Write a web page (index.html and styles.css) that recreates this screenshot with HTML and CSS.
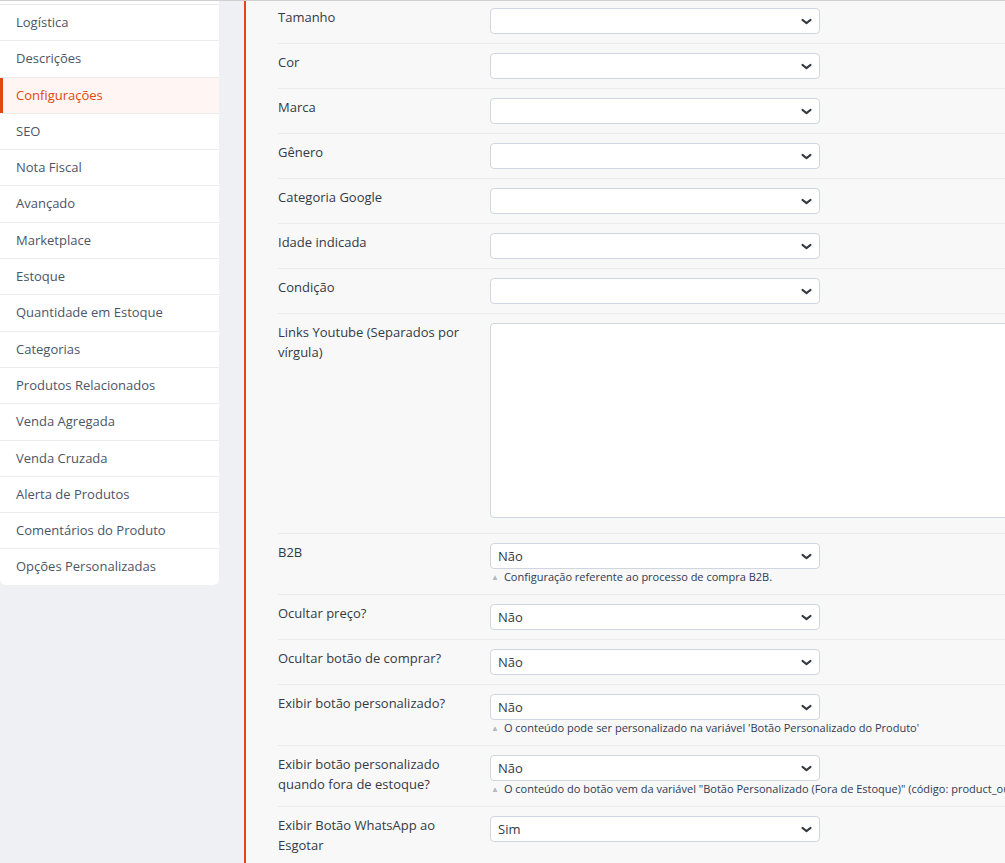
FILE: index.html
```html
<!DOCTYPE html>
<html lang="pt-BR">
  <head>
    <meta charset="UTF-8" />
    <meta name="viewport" content="width=device-width, initial-scale=1.0" />
    <title>Produto - Configurações</title>
    <link rel="stylesheet" href="styles.css">
  </head>
  <body>
    <div class="page">
      <ul class="tabs">
        <li>Logística</li>
        <li>Descrições</li>
        <li class="active">Configurações</li>
        <li>SEO</li>
        <li>Nota Fiscal</li>
        <li>Avançado</li>
        <li>Marketplace</li>
        <li>Estoque</li>
        <li>Quantidade em Estoque</li>
        <li>Categorias</li>
        <li>Produtos Relacionados</li>
        <li>Venda Agregada</li>
        <li>Venda Cruzada</li>
        <li>Alerta de Produtos</li>
        <li>Comentários do Produto</li>
        <li>Opções Personalizadas</li>
      </ul>

      <form class="panel">
        <div class="field">
          <label>Tamanho</label>
          <div class="control"><select><option></option></select></div>
        </div>
        <div class="field">
          <label>Cor</label>
          <div class="control"><select><option></option></select></div>
        </div>
        <div class="field">
          <label>Marca</label>
          <div class="control"><select><option></option></select></div>
        </div>
        <div class="field">
          <label>Gênero</label>
          <div class="control"><select><option></option></select></div>
        </div>
        <div class="field">
          <label>Categoria Google</label>
          <div class="control"><select><option></option></select></div>
        </div>
        <div class="field">
          <label>Idade indicada</label>
          <div class="control"><select><option></option></select></div>
        </div>
        <div class="field">
          <label>Condição</label>
          <div class="control"><select><option></option></select></div>
        </div>
        <div class="field field-text">
          <label>Links Youtube (Separados por vírgula)</label>
          <div class="control"><textarea></textarea></div>
        </div>
        <div class="field">
          <label>B2B</label>
          <div class="control">
            <select><option>Não</option><option>Sim</option></select>
            <p class="hint">Configuração referente ao processo de compra B2B.</p>
          </div>
        </div>
        <div class="field">
          <label>Ocultar preço?</label>
          <div class="control"><select><option>Não</option><option>Sim</option></select></div>
        </div>
        <div class="field">
          <label>Ocultar botão de comprar?</label>
          <div class="control"><select><option>Não</option><option>Sim</option></select></div>
        </div>
        <div class="field">
          <label>Exibir botão personalizado?</label>
          <div class="control">
            <select><option>Não</option><option>Sim</option></select>
            <p class="hint">O conteúdo pode ser personalizado na variável 'Botão Personalizado do Produto'</p>
          </div>
        </div>
        <div class="field">
          <label>Exibir botão personalizado quando fora de estoque?</label>
          <div class="control">
            <select><option>Não</option><option>Sim</option></select>
            <p class="hint">O conteúdo do botão vem da variável "Botão Personalizado (Fora de Estoque)" (código: product_out_of_stock_button)</p>
          </div>
        </div>
        <div class="field">
          <label>Exibir Botão WhatsApp ao Esgotar</label>
          <div class="control"><select><option>Sim</option><option>Não</option></select></div>
        </div>
      </form>
    </div>
  </body>
</html>
```

FILE: styles.css
```css
html,
body {
  margin: 0;
  height: 100%;
}

body {
  font-family: "Open Sans", Arial, sans-serif;
  font-size: 13px;
  color: #333a45;
  background-color: #eef0f4;
  border-top: 1px solid #cfcfcf;
  box-sizing: border-box;
  overflow: hidden;
}

.page {
  display: flex;
  align-items: flex-start;
  gap: 25px;
  height: 100%;
}

.tabs {
  list-style: none;
  margin: 0;
  padding: 3px 0 0;
  width: 219px;
  flex: none;
  background-color: #fff;
  border-radius: 0 0 6px 6px;
  overflow: hidden;
}

.tabs li {
  border-top: 1px solid #ebebeb;
  padding: 9px 16px;
  line-height: 17.3px;
  color: #4b5567;
  cursor: pointer;
}

.tabs li.active {
  background-color: #fff5f2;
  color: #e0480f;
  box-shadow: inset 3px 0 0 #e0480f;
}

.panel {
  flex: none;
  width: 900px;
  height: 100%;
  margin: 0;
  padding: 0 0 0 32px;
  background-color: #f8f8f8;
  border-left: 2px solid #e0480f;
  box-sizing: border-box;
}

.field {
  display: grid;
  grid-template-columns: 200px 1fr;
  column-gap: 12px;
  padding: 9px 0;
  border-bottom: 1px solid #ebebeb;
}

.field:first-child {
  padding-top: 7px;
}

.field label {
  margin-top: -1px;
  line-height: 20px;
  color: #333a45;
}

.field-text {
  padding-bottom: 15px;
}

select {
  display: block;
  width: 330px;
  height: 26px;
  padding: 0 28px 0 7px;
  font-family: "Open Sans", Arial, sans-serif;
  font-size: 13px;
  color: #333a45;
  background-color: #fff;
  background-image: url("data:image/svg+xml,%3Csvg xmlns='http://www.w3.org/2000/svg' viewBox='0 0 16 16'%3E%3Cpath fill='none' stroke='%23343a40' stroke-linecap='round' stroke-linejoin='round' stroke-width='2.4' d='M3 6l5 4 5-4'/%3E%3C/svg%3E");
  background-repeat: no-repeat;
  background-position: right 6px center;
  background-size: 13px 13px;
  border: 1px solid #cfd6e0;
  border-radius: 4px;
  appearance: none;
  -webkit-appearance: none;
  box-sizing: border-box;
}

textarea {
  display: block;
  width: 560px;
  height: 195px;
  margin: 0;
  background-color: #fff;
  border: 1px solid #cfd6e0;
  border-radius: 4px;
  resize: none;
  box-sizing: border-box;
}

.hint {
  margin: 0;
  height: 16px;
  font-size: 11px;
  line-height: 16px;
  color: #2e3a55;
  white-space: nowrap;
}

.hint::before {
  content: "\25B2";
  display: inline-block;
  font-size: 8px;
  line-height: 0;
  color: #b4b9c1;
  margin: 0 5px 0 1px;
  vertical-align: 1px;
}
```
